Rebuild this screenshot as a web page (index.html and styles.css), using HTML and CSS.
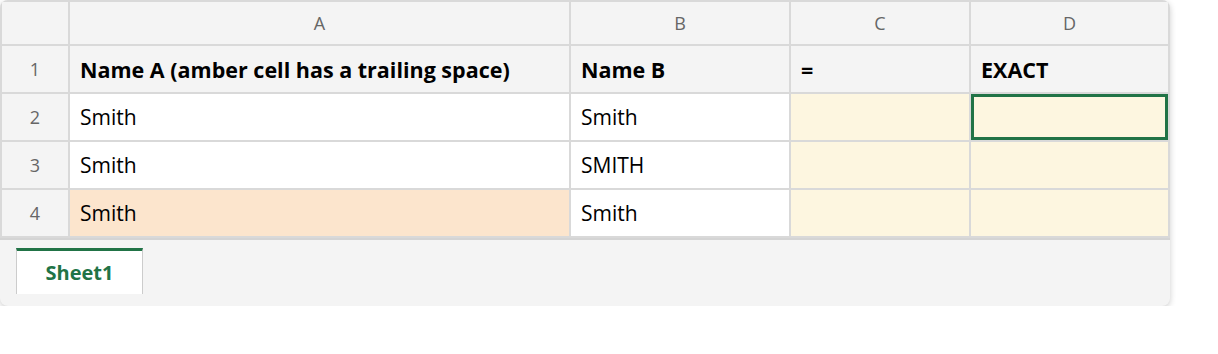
FILE: index.html
```html
<!DOCTYPE html>
<html lang="en">

<head>
  <meta charset="UTF-8">
  <meta name="viewport" content="width=device-width, initial-scale=1.0">
  <title>EXACT vs =</title>
  <link rel="stylesheet" href="styles.css">
</head>

<body>
  <div class="workbook">
    <div class="grid">
      <div class="corner"></div>
      <div class="col-head">A</div>
      <div class="col-head">B</div>
      <div class="col-head">C</div>
      <div class="col-head">D</div>

      <div class="row-head">1</div>
      <div class="cell title">Name A (amber cell has a trailing space)</div>
      <div class="cell title">Name B</div>
      <div class="cell title">=</div>
      <div class="cell title">EXACT</div>

      <div class="row-head">2</div>
      <div class="cell">Smith</div>
      <div class="cell">Smith</div>
      <div class="cell result"></div>
      <div class="cell result selected"></div>

      <div class="row-head">3</div>
      <div class="cell">Smith</div>
      <div class="cell">SMITH</div>
      <div class="cell result"></div>
      <div class="cell result"></div>

      <div class="row-head">4</div>
      <div class="cell amber">Smith</div>
      <div class="cell">Smith</div>
      <div class="cell result"></div>
      <div class="cell result"></div>
    </div>
    <div class="tabs">
      <div class="tab">Sheet1</div>
    </div>
  </div>
</body>

</html>
```

FILE: styles.css
```css
body {
  margin: 0;
  font-family: "Open Sans", "Noto Sans", sans-serif;
  background-color: #fff;
}

.workbook {
  width: 1170px;
  border-radius: 8px;
  overflow: hidden;
  background-color: #f4f4f4;
  box-shadow: 0 2px 6px rgba(0, 0, 0, 0.2);
}

.grid {
  display: grid;
  grid-template-columns: 66px 499px 218px 178px 197px;
  grid-template-rows: 42px repeat(4, 46px);
  gap: 2px;
  padding: 2px;
  background-color: #d9d9d9;
}

.corner,
.col-head,
.row-head {
  background-color: #f4f4f4;
  color: #666;
  font-size: 18px;
  display: flex;
  align-items: center;
  justify-content: center;
}

.cell {
  background-color: #fff;
  color: #000;
  font-size: 21px;
  padding-left: 10px;
  display: flex;
  align-items: center;
  box-sizing: border-box;
  white-space: nowrap;
}

.cell.title {
  background-color: #f4f4f4;
  font-weight: bold;
  font-size: 21.5px;
}

.cell.amber {
  background-color: #fce5cd;
}

.cell.result {
  background-color: #fdf6e0;
}

.cell.selected {
  border: 3px solid #217346;
}

.tabs {
  border-top: 2px solid #d4d4d4;
  height: 68px;
  padding: 8px 0 0 16px;
  box-sizing: border-box;
  display: flex;
  align-items: flex-start;
}

.tab {
  width: 127px;
  height: 46px;
  box-sizing: border-box;
  background-color: #fff;
  border-top: 3px solid #217346;
  border-left: 1px solid #ccc;
  border-right: 1px solid #ccc;
  color: #217346;
  font-weight: bold;
  font-size: 20px;
  display: flex;
  align-items: center;
  justify-content: center;
}
```
